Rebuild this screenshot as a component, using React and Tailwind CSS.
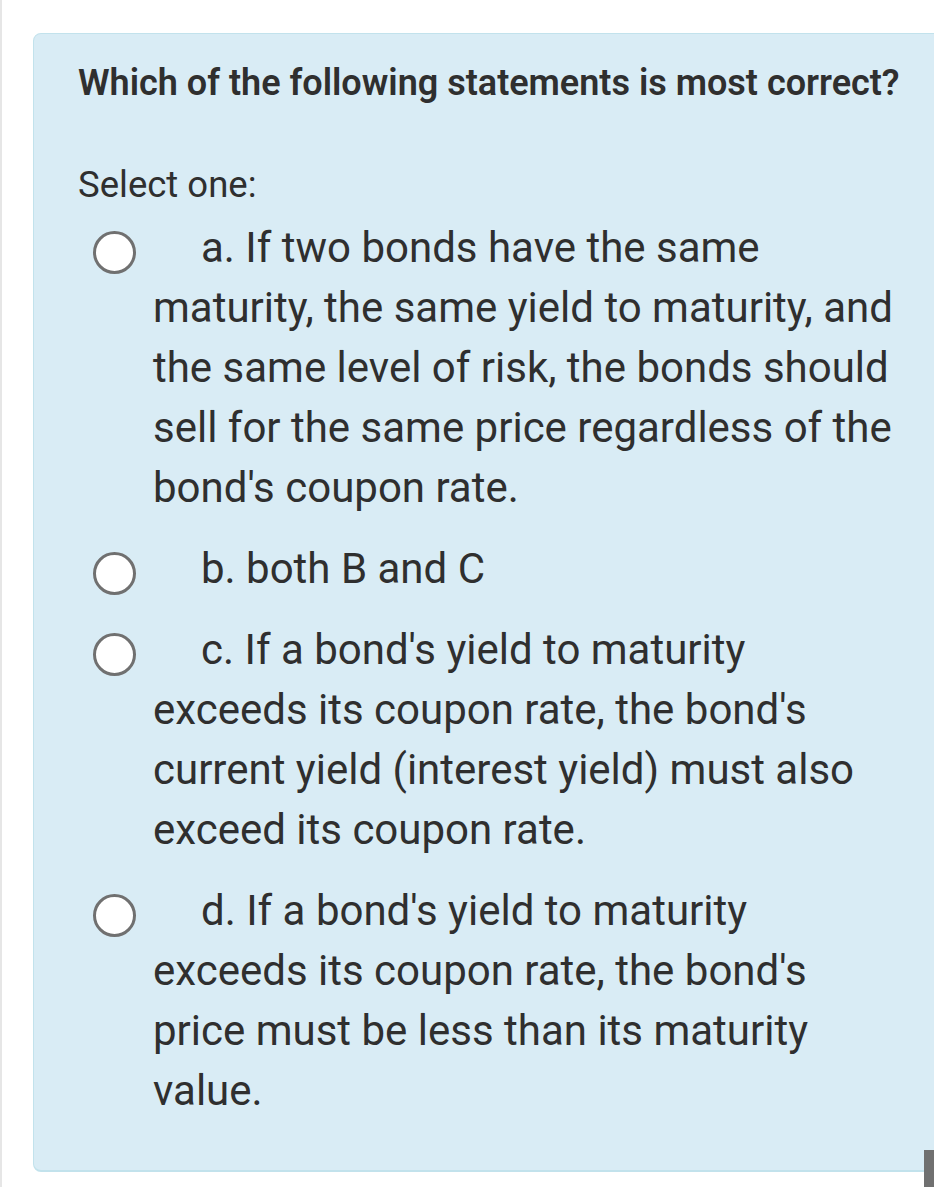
import React from "react";

function Radio() {
  return (
    <span className="inline-block align-middle mt-[4px] -ml-[60px] mr-[65px] w-[43px] h-[43px] rounded-full border-[3px] border-[#707070] bg-white box-border" />
  );
}

function Option({ lines, last }) {
  return (
    <div className={last ? "" : "mb-[21px]"}>
      <Radio />
      {lines.map((l, i) => (
        <React.Fragment key={i}>
          {i > 0 && <br />}
          {l}
        </React.Fragment>
      ))}
    </div>
  );
}

export default function App() {
  const options = [
    [
      "a. If two bonds have the same",
      "maturity, the same yield to maturity, and",
      "the same level of risk, the bonds should",
      "sell for the same price regardless of the",
      "bond's coupon rate.",
    ],
    ["b. both B and C"],
    [
      "c. If a bond's yield to maturity",
      "exceeds its coupon rate, the bond's",
      "current yield (interest yield) must also",
      "exceed its coupon rate.",
    ],
    [
      "d. If a bond's yield to maturity",
      "exceeds its coupon rate, the bond's",
      "price must be less than its maturity",
      "value.",
    ],
  ];
  return (
    <div
      className="relative w-full h-[1187px] overflow-hidden bg-white border-l-[2px] border-[#e6e6e6] text-[#2f2f2f]"
      style={{ fontFamily: "Roboto, 'Noto Sans', Arial, sans-serif" }}
    >
      <div className="mt-[33px] ml-[31px] w-[960px] rounded-[8px] border border-[#c2e2ec] border-b-2 bg-[#d9ecf5] pt-[19px] pl-[44px] pb-[49px] leading-[60px]">
        <div className="font-semibold whitespace-nowrap text-[36px]">
          Which of the following statements is most correct?
        </div>
        <div className="mt-[42px] whitespace-nowrap text-[36.5px]">Select one:</div>
        <div className="mt-[3px] pl-[75px] whitespace-nowrap text-[42px]">
          {options.map((o, i) => (
            <Option key={i} lines={o} last={i === options.length - 1} />
          ))}
        </div>
      </div>
      <div className="absolute right-0 top-[1150px] w-[10px] h-[37px] bg-[#707070]" />
    </div>
  );
}
